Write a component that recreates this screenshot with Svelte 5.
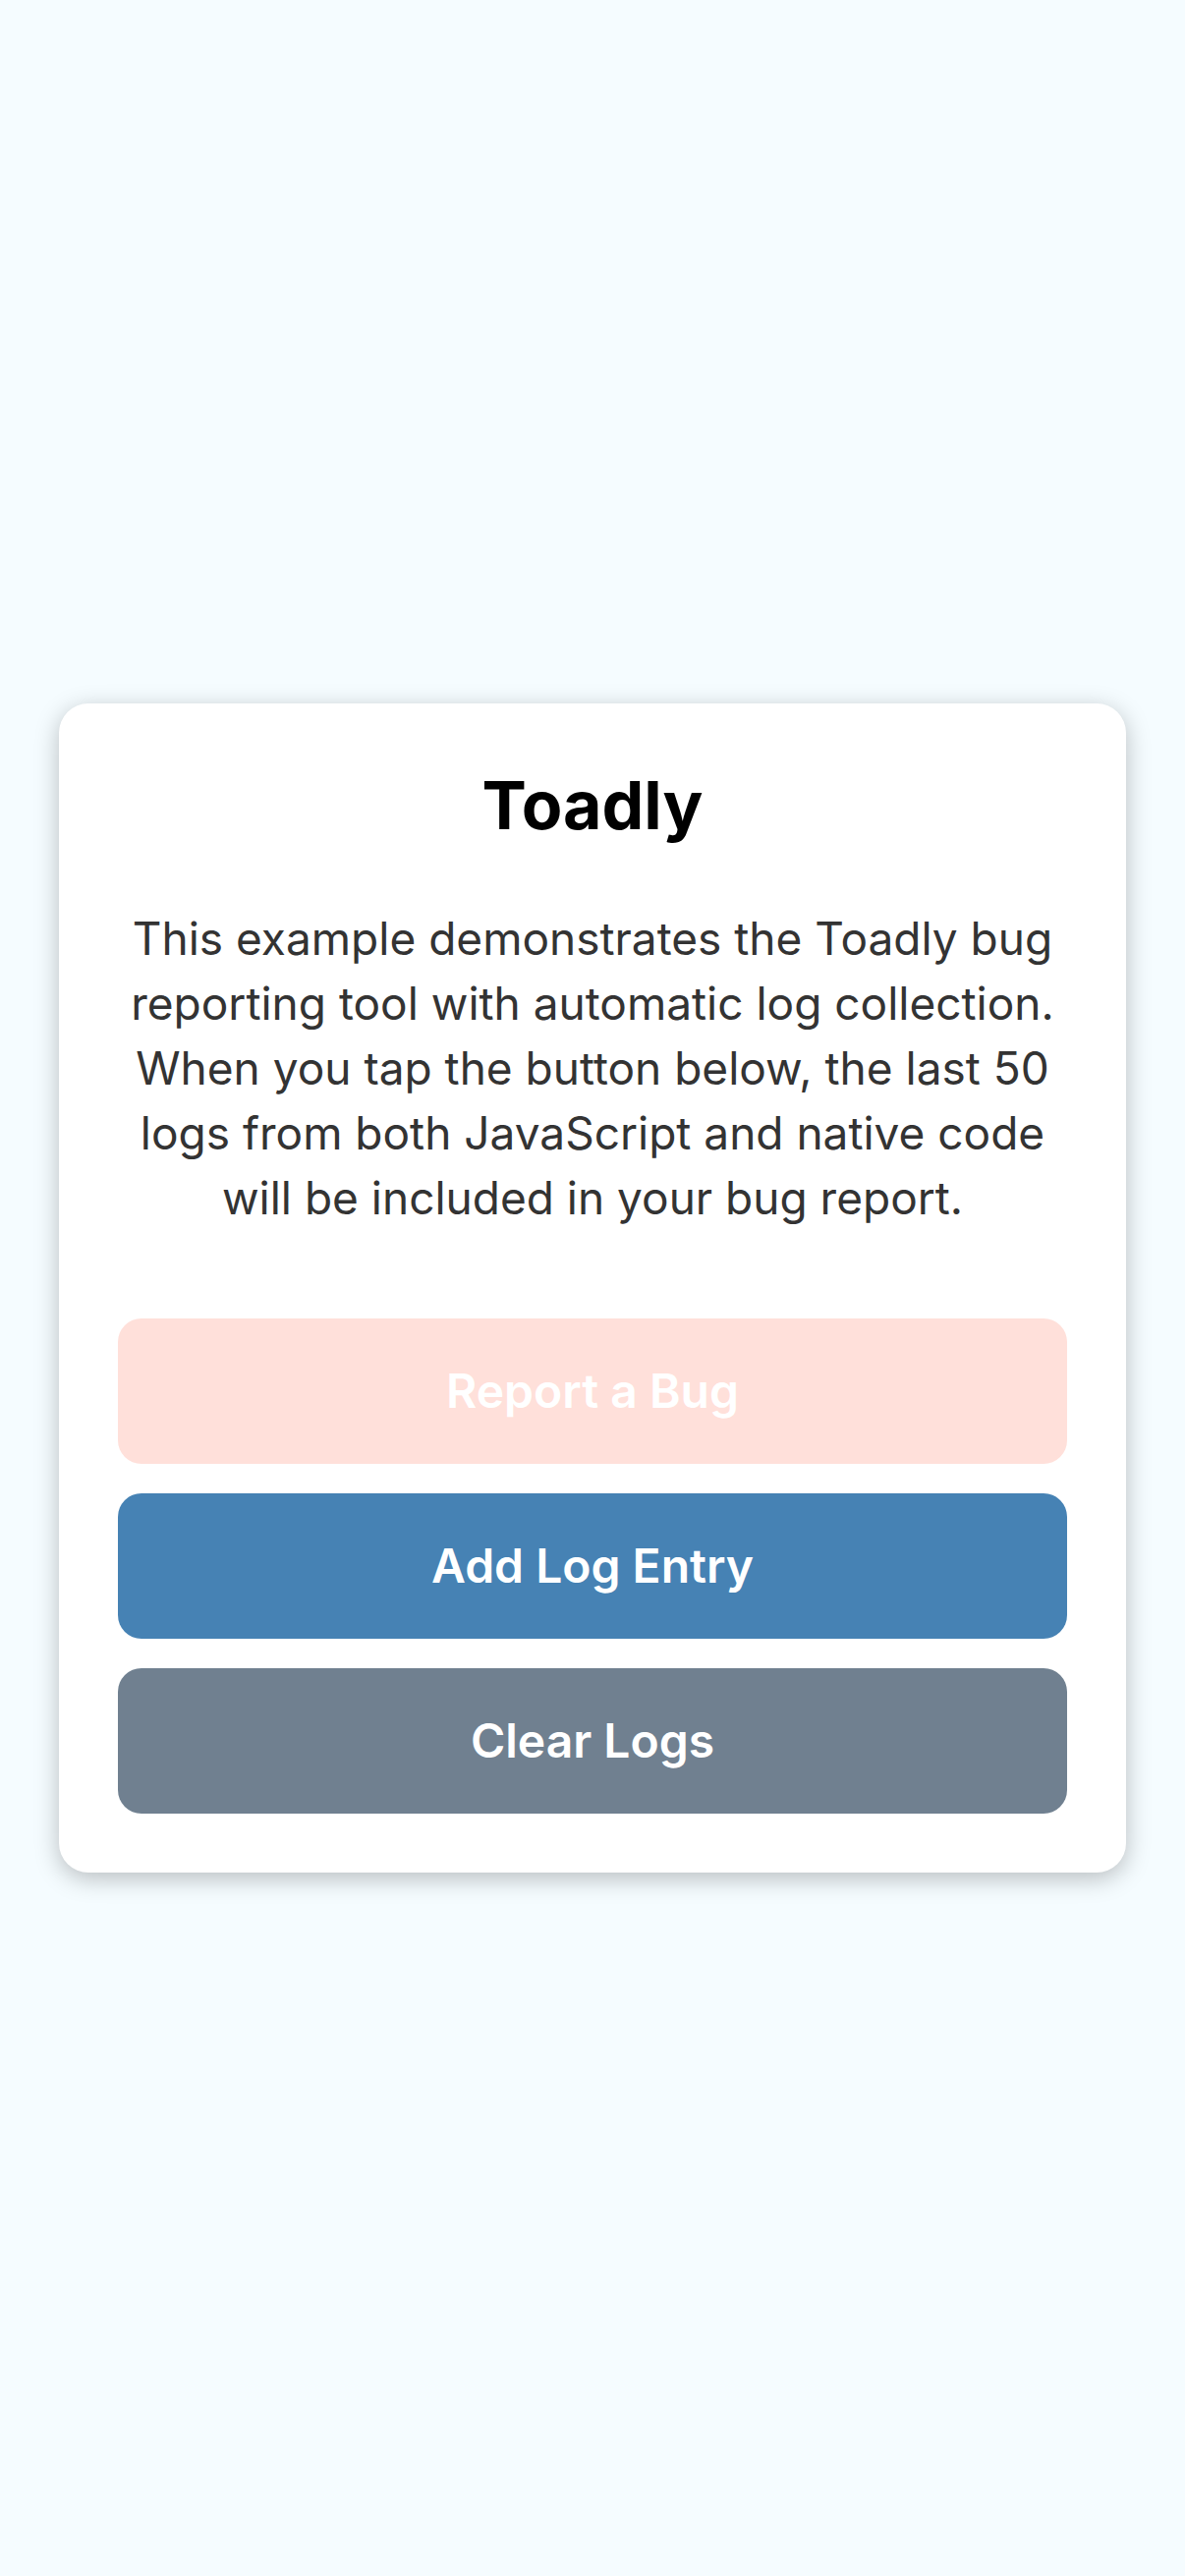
<script>
  let logs = $state([]);

  function addLog() {
    logs = [...logs, `Log entry ${logs.length + 1}`];
  }

  function clearLogs() {
    logs = [];
  }
</script>

<main class="screen">
  <section class="card">
    <h1>Toadly</h1>
    <p>
      This example demonstrates the Toadly bug reporting tool with automatic log
      collection. When you tap the button below, the last 50 logs from both
      JavaScript and native code will be included in your bug report.
    </p>
    <div class="actions">
      <button type="button" class="report">Report a Bug</button>
      <button type="button" class="add" onclick={addLog}>Add Log Entry</button>
      <button type="button" class="clear" onclick={clearLogs}>Clear Logs</button>
    </div>
  </section>
</main>

<style>
  :global(body) {
    margin: 0;
    background: #f5fcff;
  }

  .screen {
    box-sizing: border-box;
    min-height: 100vh;
    padding: 60px;
    display: flex;
    align-items: center;
    justify-content: center;
    font-family: Inter, "Liberation Sans", sans-serif;
    background: #f5fcff;
  }

  .card {
    box-sizing: border-box;
    width: 100%;
    padding: 60px;
    border-radius: 30px;
    background: #fff;
    box-shadow: 0 6px 24px rgba(0, 0, 0, 0.25);
    text-align: center;
  }

  h1 {
    margin: 0 0 60px;
    font-size: 68px;
    line-height: 86px;
    font-weight: 700;
    color: #000;
  }

  p {
    margin: 0 0 90px;
    font-size: 46px;
    line-height: 66px;
    color: #333;
  }

  .actions {
    display: flex;
    flex-direction: column;
    gap: 30px;
  }

  button {
    padding: 45px;
    border: 0;
    border-radius: 24px;
    font: inherit;
    font-size: 48px;
    line-height: 58px;
    font-weight: 600;
    color: #fff;
    cursor: pointer;
  }

  .report {
    background: #ffe0da;
  }

  .add {
    background: #4682b4;
  }

  .clear {
    background: #708090;
  }
</style>
